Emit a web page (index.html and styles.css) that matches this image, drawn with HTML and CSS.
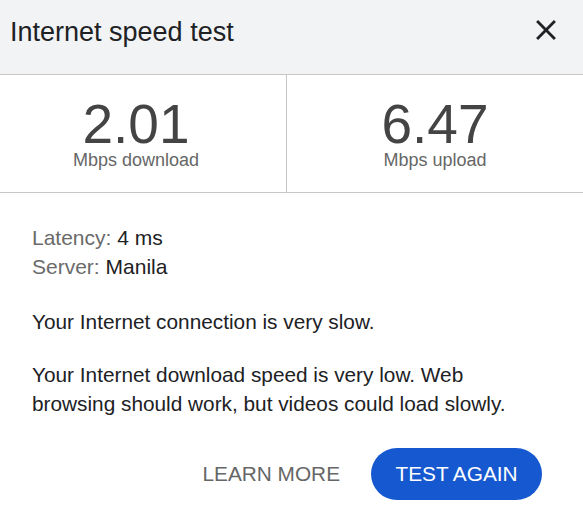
FILE: index.html
```
<!DOCTYPE html>
<html>
<head>
<meta charset="utf-8">
<link rel="stylesheet" href="styles.css">
</head>
<body>
<div class="dialog">
  <div class="header">
    <div class="title">Internet speed test</div>
    <button class="close" aria-label="Close">
      <svg viewBox="0 0 24 24" width="34" height="34"><path d="M19 6.41L17.59 5 12 10.59 6.41 5 5 6.41 10.59 12 5 17.59 6.41 19 12 13.41 17.59 19 19 17.59 13.41 12z"/></svg>
    </button>
  </div>
  <div class="stats">
    <div class="stat stat-left">
      <div class="num">2.01</div>
      <div class="unit">Mbps download</div>
    </div>
    <div class="stat stat-right">
      <div class="num">6.47</div>
      <div class="unit">Mbps upload</div>
    </div>
  </div>
  <div class="details">
    <div class="meta"><span class="label">Latency:</span> <span class="value">4 ms</span></div>
    <div class="meta"><span class="label">Server:</span> <span class="value">Manila</span></div>
    <p class="msg msg-first">Your Internet connection is very slow.</p>
    <p class="msg">Your Internet download speed is very low. Web browsing should work, but videos could load slowly.</p>
    <div class="actions">
      <button class="learn">LEARN MORE</button>
      <button class="again">TEST AGAIN</button>
    </div>
  </div>
</div>
</body>
</html>
```
FILE: styles.css
```
html, body {
  margin: 0;
  padding: 0;
  background: #ffffff;
}
body {
  font-family: "Liberation Sans", Arial, sans-serif;
  color: #202124;
}
.dialog {
  width: 583px;
  height: 505px;
  overflow: hidden;
}
.header {
  background: #f1f3f4;
  height: 74px;
  border-bottom: 1px solid #c6c6c6;
  display: flex;
  align-items: flex-start;
  justify-content: space-between;
  box-sizing: content-box;
}
.title {
  font-size: 27px;
  line-height: 32px;
  padding: 16px 0 0 10px;
  color: #202124;
}
.close {
  border: 0;
  background: transparent;
  padding: 0;
  margin: 13px 20px 0 0;
  width: 34px;
  height: 34px;
  cursor: pointer;
}
.close svg {
  display: block;
  fill: #202124;
}
.stats {
  display: flex;
  border-bottom: 1px solid #c6c6c6;
  height: 117px;
}
.stat {
  flex: 1;
  text-align: center;
  padding-top: 23px;
}
.stat-left {
  border-right: 1px solid #c6c6c6;
  padding-right: 14px;
}
.stat-right {
  flex: 0 0 296px;
}
.num {
  font-size: 55px;
  line-height: 52px;
  color: #444444;
}
.unit {
  font-size: 18px;
  line-height: 20px;
  color: #666666;
}
.details {
  padding: 30px 41px 0 32px;
}
.meta {
  font-size: 21px;
  line-height: 29px;
}
.label {
  color: #6a6a6a;
}
.value {
  color: #202124;
}
.msg {
  margin: 24px 0 0 0;
  font-size: 20.8px;
  line-height: 29px;
  color: #202124;
}
.msg-first {
  margin-top: 26px;
}
.actions {
  display: flex;
  justify-content: flex-end;
  align-items: center;
  margin-top: 30px;
}
.learn {
  border: 0;
  background: transparent;
  font-family: inherit;
  font-size: 20.8px;
  color: #666666;
  padding: 0;
  margin-right: 31px;
  line-height: 52px;
}
.again {
  border: 0;
  background: #1558d0;
  color: #ffffff;
  font-family: inherit;
  font-size: 20.8px;
  height: 52px;
  width: 171px;
  border-radius: 26px;
  padding: 0;
}
```
